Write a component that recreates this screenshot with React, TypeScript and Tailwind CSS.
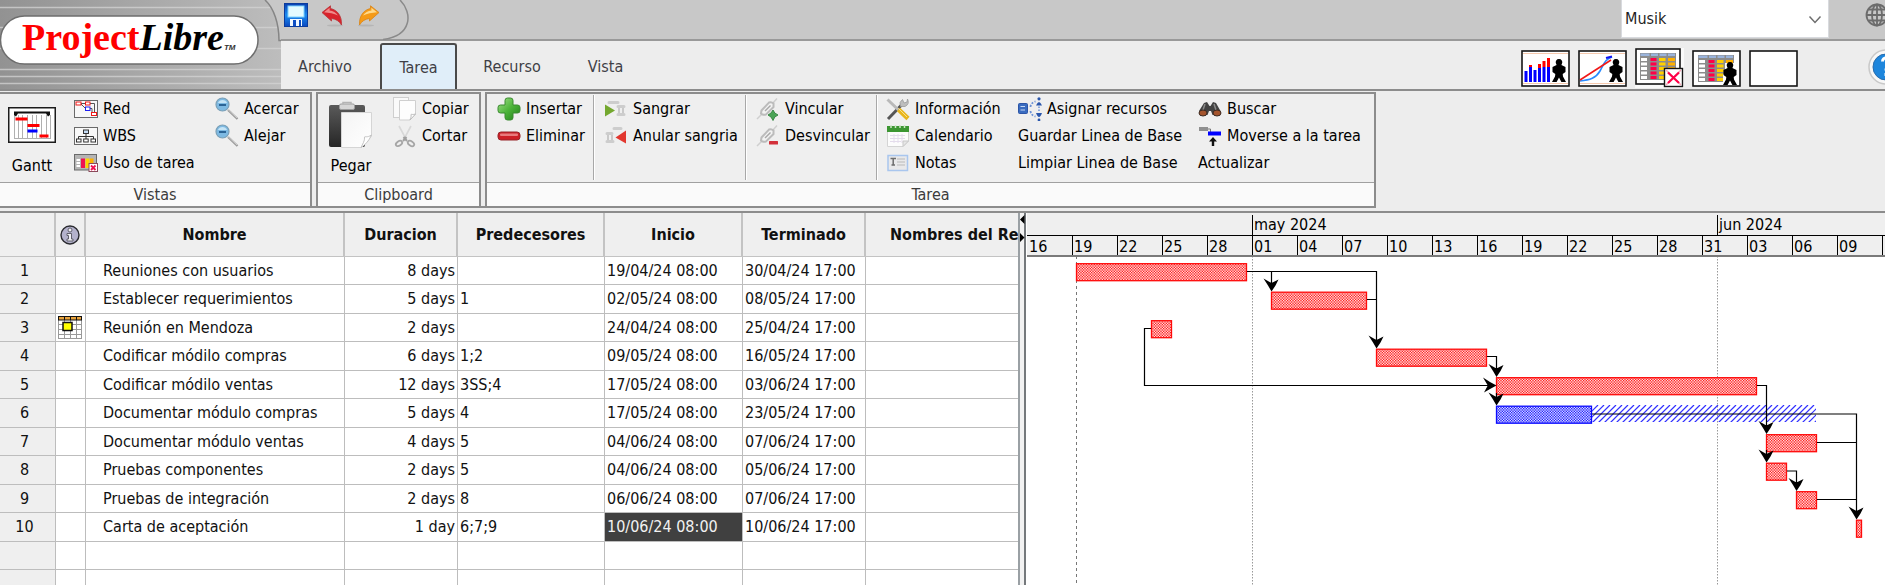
import React from "react";

/* ---------- Quick-access icons ---------- */

const SaveIcon = () => (
  <svg width="24" height="24" viewBox="0 0 24 24" aria-hidden="true">
    <defs>
      <linearGradient id="save" x1="0" y1="0" x2="0" y2="1">
        <stop offset="0" stopColor="#0a3fb0" />
        <stop offset="0.5" stopColor="#1b8cf0" />
        <stop offset="1" stopColor="#0b49c0" />
      </linearGradient>
    </defs>
    <rect x="0.5" y="0.5" width="23" height="23" fill="url(#save)" stroke="#0b3c9c" />
    <rect x="4" y="3" width="16" height="11" fill="#e4fbff" stroke="#7fd4ff" />
    <rect x="6" y="16" width="12" height="7" fill="#f2faff" />
    <rect x="9" y="17" width="3" height="6" fill="#0f4fc4" />
    <rect x="15" y="17" width="2" height="6" fill="#0f4fc4" />
  </svg>
);

const UndoIcon = () => (
  <svg width="22" height="22" viewBox="0 0 22 22" aria-hidden="true">
    <ellipse cx="14" cy="20.500" rx="8" ry="1" fill="#b5b5b5" />
    <path d="M1 7.500L9.500 0.800V3.500C16.500 5 21 11 20.500 20C18 16 15 14 10.500 13.500V16Z" fill="#d8232c" stroke="#b8363a" strokeWidth="0.800" />
    <path d="M3 7.200L8.600 2.800V5.500C12 6 15 7.500 17 10.500C13 8.500 8 7.800 3 7.200Z" fill="#f08a8a" />
  </svg>
);

const RedoIcon = () => (
  <svg width="22" height="22" viewBox="0 0 22 22" aria-hidden="true">
    <ellipse cx="8" cy="20.500" rx="8" ry="1" fill="#b5b5b5" />
    <path d="M21 7.500L12.500 0.800V3.500C5.500 5 1 11 1.500 20C4 16 7 14 11.500 13.500V16Z" fill="#f59a16" stroke="#d88418" strokeWidth="0.800" />
    <path d="M19 7.200L13.400 2.800V5.500C10 6 7 7.500 5 10.500C9 8.500 14 7.800 19 7.200Z" fill="#ffd98a" />
  </svg>
);

const GlobeIcon = () => (
  <svg className="shrink-0" width="24" height="24" viewBox="0 0 24 24" fill="none" stroke="#6c6c6c" strokeWidth="1.800" aria-hidden="true">
    <circle cx="12" cy="12" r="10.500" />
    <ellipse cx="12" cy="12" rx="5" ry="10.500" />
    <path d="M12 1.500V22.500M1.500 12H22.500M3.500 6.500H20.500M3.500 17.500H20.500" />
  </svg>
);

const HelpIcon = () => (
  <svg className="shrink-0" width="36" height="36" viewBox="0 0 36 36" aria-hidden="true">
    <circle cx="18" cy="18" r="17" fill="#f7f7f7" stroke="#c9c9c9" strokeWidth="1.500" />
    <circle cx="18" cy="18" r="13" fill="#1e86dc" stroke="#2a6cab" strokeWidth="1" />
    <path d="M14.500 12.500c0-5 8-5 8 0 0 4-4.500 4-4.500 9M18 24v3" stroke="#fff" strokeWidth="3" fill="none" />
  </svg>
);

/* ---------- Ribbon icons ---------- */

const GanttIcon = () => (
  <svg width="48" height="36" viewBox="0 0 48 36" aria-hidden="true">
    <rect x="0.750" y="0.750" width="46.500" height="34.500" fill="#fff" stroke="#1c1c1c" strokeWidth="1.500" />
    <path d="M6.500 8V31M10.500 8V31M14.500 8V31M19.500 8V31M24.500 8V31M28.500 8V31M33.500 8V31M38.500 8V31M42.500 8V31M6 31.500H43" stroke="#b0b0b0" />
    <path d="M6 4.500H42V8L40 9.500 38 6.500H10L8 9.500 6 8Z" fill="#111" />
    <rect x="7.500" y="10.500" width="12" height="3" fill="#f00" />
    <rect x="19.500" y="17" width="12" height="3" fill="#f00" />
    <rect x="19.500" y="22.500" width="10" height="3" fill="#00f" />
    <rect x="31.500" y="27.500" width="9" height="3" fill="#f00" />
  </svg>
);

const NetworkIcon = () => (
  <svg width="24" height="18" viewBox="0 0 24 18" aria-hidden="true">
    <rect x="0.500" y="0.500" width="23" height="17" fill="#f8f8f8" stroke="#6a6a6a" />
    <path d="M7 3.500H12M16 3.500H20.500V12M7 4L11 8M16 8.500H18V13" fill="none" stroke="#555" />
    <rect x="2" y="2" width="5" height="3" fill="#fff" stroke="#f01818" />
    <rect x="11.500" y="2" width="4.500" height="3" fill="#fff" stroke="#f01818" />
    <rect x="11.500" y="7" width="4.500" height="3.500" fill="#fff" stroke="#2020f0" />
    <rect x="17.500" y="12.500" width="5" height="3" fill="#fff" stroke="#f01818" />
  </svg>
);

const WbsIcon = () => (
  <svg width="24" height="18" viewBox="0 0 24 18" aria-hidden="true">
    <rect x="0.500" y="0.500" width="23" height="17" fill="#f8f8f8" stroke="#6a6a6a" />
    <path d="M12 6V12M4.500 12V9.500H19.500V12" fill="none" stroke="#333" />
    <g fill="#fff" stroke="#333">
      <rect x="9.500" y="3" width="5" height="3.500" fill="#c5dcf5" />
      <rect x="2.500" y="12" width="4.500" height="3" />
      <rect x="9.700" y="12" width="4.500" height="3" />
      <rect x="17" y="12" width="4.500" height="3" />
    </g>
  </svg>
);

const TaskUsageIcon = () => (
  <svg width="24" height="18" viewBox="0 0 24 18" aria-hidden="true">
    <rect x="0.500" y="0.500" width="22" height="15.500" fill="#b4b4b4" stroke="#6a6a6a" />
    <path d="M2.500 5h3.500v2h-3.500zM2.500 8h3.500v2h-3.500zM2.500 11h3.500v2h-3.500z" fill="#fff" />
    <rect x="7" y="4.500" width="4" height="9.500" fill="#f01050" />
    <rect x="11.500" y="4.500" width="4" height="9.500" fill="#ffd400" />
    <rect x="16" y="4.500" width="3.500" height="9.500" fill="#ffb000" />
    <rect x="15" y="9.500" width="8.500" height="8" fill="#fff" stroke="#8a4a5a" />
    <path d="M17 11.500L21.500 16M21.500 11.500L17 16" stroke="#f01050" strokeWidth="1.800" />
  </svg>
);

const ZoomIcon = () => (
  <svg width="24" height="24" viewBox="0 0 24 24" aria-hidden="true">
    <path d="M13 13L22.500 22" stroke="#9a9a9a" strokeWidth="2.200" />
    <path d="M13 12.500L22 21" stroke="#dcdcdc" strokeWidth="0.800" />
    <circle cx="7.500" cy="7.500" r="6.500" fill="#7db9e2" stroke="#7a9fb6" strokeWidth="1.200" />
    <path d="M3 6C4 2 11 2 12 6Z" fill="#c5e4f6" />
    <rect x="4" y="7" width="7" height="2" fill="#2b6496" />
  </svg>
);

const PasteIcon = () => (
  <svg width="46" height="48" viewBox="0 0 46 48" aria-hidden="true">
    <defs>
      <linearGradient id="board" x1="0" y1="0" x2="0" y2="1">
        <stop offset="0" stopColor="#5a5a5a" />
        <stop offset="1" stopColor="#262626" />
      </linearGradient>
      <linearGradient id="paper" x1="0" y1="0" x2="1" y2="1">
        <stop offset="0" stopColor="#f4f4f4" />
        <stop offset="1" stopColor="#fff" />
      </linearGradient>
    </defs>
    <rect x="1" y="4" width="36" height="42" rx="2" fill="url(#board)" />
    <rect x="11.500" y="3" width="15" height="5.500" rx="1.500" fill="#d6d6d6" stroke="#9c9c9c" />
    <path d="M15 3V1.500H23V3" fill="none" stroke="#b4b4b4" strokeWidth="1.500" />
    <path d="M13.500 11.500H43.500V35L33.500 46.500H13.500Z" fill="url(#paper)" stroke="#d5d5d5" />
    <path d="M43.500 34C39 37 37 35 36.500 36C37 40 34.500 43 33 46.500C37 44 41 40 43.500 34Z" fill="#fff" stroke="#c4c4c4" />
  </svg>
);

const CopyIcon = () => (
  <svg width="24" height="24" viewBox="0 0 24 24" aria-hidden="true">
    <rect x="0.500" y="0.500" width="15" height="20" fill="#fafafa" stroke="#cfcfcf" />
    <path d="M6.500 3.500H22.500V17L17 23H6.500Z" fill="#fdfdfd" stroke="#cfcfcf" />
    <path d="M22.500 17C20 18 18 17 18 17.500 18.500 20 17.500 21 17 23Z" fill="#fff" stroke="#bcbcbc" />
  </svg>
);

const CutIcon = () => (
  <svg width="24" height="24" viewBox="0 0 24 24" fill="none" aria-hidden="true">
    <path d="M6 2L13.500 16M18 2L10.500 16" stroke="#d8d8d8" strokeWidth="1.600" />
    <path d="M10.500 13L14 17M13.500 13L10 17" stroke="#a0a0a0" strokeWidth="2" />
    <ellipse cx="6" cy="19.500" rx="3.500" ry="2.200" stroke="#a6a6a6" strokeWidth="1.800" transform="rotate(-35 6 19.500)" />
    <ellipse cx="18" cy="19.500" rx="3.500" ry="2.200" stroke="#a6a6a6" strokeWidth="1.800" transform="rotate(35 18 19.500)" />
  </svg>
);

const PlusIcon = () => (
  <svg width="24" height="24" viewBox="0 0 24 24" aria-hidden="true">
    <defs>
      <linearGradient id="plus" x1="0" y1="0" x2="1" y2="1">
        <stop offset="0" stopColor="#a6e08e" />
        <stop offset="0.500" stopColor="#4db53a" />
        <stop offset="1" stopColor="#1f7d18" />
      </linearGradient>
    </defs>
    <path d="M8 3.500Q8 1 10.500 1H13.500Q16 1 16 3.500V8H20.500Q23 8 23 10.500V13.500Q23 16 20.500 16H16V20.500Q16 23 13.500 23H10.500Q8 23 8 20.500V16H3.500Q1 16 1 13.500V10.500Q1 8 3.500 8H8Z" fill="url(#plus)" stroke="#3a8a30" />
  </svg>
);

const MinusIcon = () => (
  <svg width="24" height="24" viewBox="0 0 24 24" aria-hidden="true">
    <rect x="1" y="8" width="22" height="8" rx="3" fill="#cc1f26" stroke="#97262b" />
    <rect x="3" y="9.500" width="18" height="2.500" rx="1" fill="#e87b7d" />
  </svg>
);

const IndentIcon = () => (
  <svg width="24" height="24" viewBox="0 0 24 24" aria-hidden="true">
    <path d="M5 5.500H14M14 9.500H20M14 17.500H20" stroke="#cdcdcd" strokeWidth="3" strokeLinecap="round" />
    <path d="M15 11V16M19 11V16" stroke="#bdbdbd" strokeWidth="1.500" />
    <path d="M1 7.500L11 13.500 1 19.500Z" fill="#74a82f" />
  </svg>
);

const OutdentIcon = () => (
  <svg width="24" height="24" viewBox="0 0 24 24" aria-hidden="true">
    <path d="M10 4.500H17M3 9.500H8M3 17.500H9" stroke="#cdcdcd" strokeWidth="3" strokeLinecap="round" />
    <path d="M4 11V16M8 11V16" stroke="#bdbdbd" strokeWidth="1.500" />
    <path d="M22 6.500L11.500 13.500 22 19.500Z" fill="#e2372f" />
  </svg>
);

const LinkBase = () => (
  <>
    <path d="M1 22L6 17M17 6L21 1.500" stroke="#cfcfcf" strokeWidth="1.500" />
    <path d="M5.500 13.500L13 5.500Q15.500 4.500 17.500 6.500V10L10 17.500Q7 18.500 5 16.500Z" fill="#f3f3f3" stroke="#bcbcbc" strokeWidth="2" />
    <path d="M9 14L14.500 8.500" stroke="#a8a8a8" strokeWidth="1.500" />
  </>
);

const LinkIcon = () => (
  <svg width="24" height="24" viewBox="0 0 24 24" aria-hidden="true">
    <LinkBase />
    <path d="M17 13L18.800 16 22 18 18.800 20 17 23.500 15 20 12 18 15 16Z" fill="#4aa456" stroke="#3c8a48" />
  </svg>
);

const UnlinkIcon = () => (
  <svg width="24" height="24" viewBox="0 0 24 24" aria-hidden="true">
    <LinkBase />
    <rect x="13" y="17" width="9" height="3.500" rx="0.500" fill="#d3303a" />
  </svg>
);

const ToolsIcon = () => (
  <svg width="24" height="24" viewBox="0 0 24 24" aria-hidden="true">
    <path d="M2 22L15 8.500" stroke="#555" strokeWidth="3" />
    <path d="M14.500 9.500Q12.500 5 16.500 2.500L18 6 21 5 21.500 2Q24 7 19 9.500Z" fill="#bdbdbd" stroke="#9a9a9a" strokeWidth="0.800" />
    <path d="M1.500 2.500L12.500 13" stroke="#b9b9b9" strokeWidth="3" />
    <path d="M12.500 12.500L22 21.500" stroke="#e8b51c" strokeWidth="4.500" />
    <path d="M12.500 11.500L21 20" stroke="#f8e08a" strokeWidth="1" />
  </svg>
);

const CalendarIcon = () => (
  <svg width="24" height="24" viewBox="0 0 24 24" aria-hidden="true">
    <path d="M1.500 5H22.500V17L17 22.500H1.500Z" fill="#fcfcfc" stroke="#d4d4d4" />
    <rect x="1" y="2" width="22" height="6" fill="#3c9632" />
    <path d="M5 1V4M9.500 1V4M14 1V4M18.500 1V4" stroke="#cde8c8" strokeWidth="1.500" />
    <path d="M4 11.500H19M4 14.500H19M4 17.500H15M8 10V19M12 10V19M16 10V19" stroke="#e4dcec" />
    <path d="M22.500 17L17 22.500V17Z" fill="#e6e6e6" stroke="#c8c8c8" />
  </svg>
);

const NotesIcon = () => (
  <svg width="24" height="24" viewBox="0 0 24 24" aria-hidden="true">
    <rect x="2" y="4.500" width="19.500" height="15" fill="#e9e9ea" stroke="#a9c6ee" strokeWidth="1.500" />
    <path d="M4.500 7.500H10M7.200 7.500V14M5.500 14H9" stroke="#6e6e6e" strokeWidth="1.500" />
    <path d="M11 8H19M11 11H19M11 14H19" stroke="#b9b9b9" />
  </svg>
);

const AssignIcon = () => (
  <svg width="24" height="24" viewBox="0 0 24 24" fill="none" aria-hidden="true">
    <rect x="0.500" y="6.500" width="9" height="10" rx="1" fill="#3a6cc0" stroke="#2d55a6" />
    <path d="M2.500 9.500H7M2.500 13H7" stroke="#c5d8f5" />
    <path d="M12.500 10Q13 5.500 17.500 4.500M12.500 14Q13 18.500 17.500 19.500" stroke="#6c92d6" strokeWidth="1.800" strokeDasharray="2 1.500" />
    <g fill="#2a56ac">
      <circle cx="21" cy="1.800" r="1.600" /><path d="M18 8.500Q21 1.500 24 8.500Z" />
      <circle cx="21" cy="23" r="1.400" /><path d="M18 16Q21 24 24 16Z" />
    </g>
    <path d="M21 9.500V15" stroke="#6c92d6" strokeWidth="1.500" strokeDasharray="1.500 1.500" />
  </svg>
);

const BinocularsIcon = () => (
  <svg width="24" height="24" viewBox="0 0 24 24" aria-hidden="true">
    <path d="M6 6L9 5 11.500 9H12.500L15 5 18 6 22.500 14 21 18H14.500L13 14H11L9.500 18H3L1 14Z" fill="#424242" />
    <path d="M7 7L5 13M16 7L18 13" stroke="#8a8a8a" strokeWidth="1.500" />
    <ellipse cx="5" cy="16" rx="4" ry="3" fill="#a4542c" stroke="#3a2a22" />
    <ellipse cx="19" cy="16" rx="4" ry="3" fill="#a4542c" stroke="#3a2a22" />
  </svg>
);

const GoToTaskIcon = () => (
  <svg width="24" height="24" viewBox="0 0 24 24" aria-hidden="true">
    <rect x="1" y="3" width="9" height="4" fill="#8f8f8f" />
    <path d="M10 5H12.500V9" fill="none" stroke="#777" />
    <rect x="10" y="7.500" width="13" height="4" fill="#00f" />
    <path d="M15 13L19 17.500H16.200V22H13.800V17.500H11Z" fill="#111" />
  </svg>
);

/* ---------- View-switcher icons ---------- */

const Person = () => (
  <path
    d="M38 9a3.200 3.200 0 0 1 3 4.600l-0.600 1.400 4.100 2v5l-2.800 2 0.300 2.600 3 5.400h-4.600l-2.400-4.500-2.400 4.500h-4.600l3-5.400 0.300-2.600-2.800-2v-5l4.100-2-0.600-1.400A3.200 3.200 0 0 1 38 9Z"
    fill="#000"
  />
);

const Frame = ({ children }: { children?: React.ReactNode }) => (
  <svg width="49" height="37" viewBox="0 0 49 37" aria-hidden="true">
    <rect x="1" y="1" width="47" height="35" fill="#fff" stroke="#151515" strokeWidth="1.600" />
    {children}
  </svg>
);

const UsageGrid = () => (
  <>
    <rect x="6" y="5" width="36" height="27" fill="#8c8c8c" />
    <path d="M6.500 5.500h9v2.500h-9zM17 5.500h7v2.500h-7zM25.500 5.500h7v2.500h-7zM34 5.500h7v2.500h-7z" fill="#9ab4dc" />
    {[10, 14.500, 19, 23.500, 28].map((y) => (
      <g key={y}>
        <rect x="7" y={y} width="6" height="3" fill="#fff" />
        <rect x="16.500" y={y} width="6" height="3" fill="#ff0048" />
        <rect x="25" y={y} width="6.500" height="3" fill="#ffd000" />
        <rect x="34" y={y} width="7" height="3" fill="#ffb000" />
      </g>
    ))}
  </>
);

const HistogramIcon = () => (
  <Frame>
    <path d="M2 3.500H47M2 33.500H47" stroke="#f5c9ae" />
    <g fill="#00f">
      <rect x="3.500" y="21" width="3" height="11" />
      <rect x="8" y="17" width="3" height="15" />
      <rect x="12.500" y="20" width="3" height="12" />
      <rect x="17" y="18" width="3" height="14" />
      <rect x="21.500" y="17" width="3" height="15" />
      <rect x="26" y="17" width="3" height="15" />
    </g>
    <g fill="#f00">
      <rect x="8" y="15" width="3" height="2" />
      <rect x="17" y="14" width="3" height="4" />
      <rect x="21.500" y="11" width="3" height="6" />
      <rect x="26" y="8" width="3" height="9" />
    </g>
    <Person />
  </Frame>
);

const CurveIcon = () => (
  <Frame>
    <path d="M2 3.500H47M2 33.500H47" stroke="#f5c9ae" />
    <path d="M2 31C12 30 18 28 22 21S27 9 34 7" fill="none" stroke="#2a8cff" strokeWidth="1.600" />
    <path d="M28 8L34 6.500" stroke="#1010f0" strokeWidth="2" />
    <path d="M2 30L33 10" stroke="#f01818" strokeWidth="1.600" />
    <Person />
  </Frame>
);

const TaskUsageView = () => (
  <svg className="relative -top-[2px]" width="49" height="40" viewBox="0 0 49 40" aria-hidden="true">
    <rect width="49" height="40" fill="#fafafa" />
    <rect x="1" y="1" width="44" height="35" fill="#fff" stroke="#151515" strokeWidth="1.600" />
    <g transform="translate(-1 0)"><UsageGrid /></g>
    <rect x="29.500" y="20.500" width="18" height="18" fill="#fff" stroke="#151515" strokeWidth="1.400" />
    <path d="M31 22L46 37M46 22L31 37" stroke="#f5a8b8" strokeWidth="1.500" />
    <path d="M33 24.500L44 35M44 24.500L33 35" stroke="#ff0048" strokeWidth="2.200" />
  </svg>
);

const ResourceUsageView = () => (
  <Frame>
    <UsageGrid />
    <path d="M33 13H43V34H31V24H33Z" fill="#fff" />
    <g transform="translate(0 3)"><Person /></g>
  </Frame>
);

/* ---------- Ribbon ---------- */

const RibbonButton = ({ label, icon }: { label: string; icon?: React.ReactNode }) => (
  <button type="button" className="flex h-[27px] items-center gap-[5px] whitespace-nowrap text-black">
    {icon && <span className="flex w-6 shrink-0 justify-center">{icon}</span>}
    {label}
  </button>
);

const RibbonGroup = ({ title, className, children }: { title: string; className: string; children: React.ReactNode }) => (
  <section className={"flex flex-col border-x-2 border-t-2 border-[#8c8c8c] bg-[#efefef] " + className}>
    <div className="flex h-[88px] pt-px">{children}</div>
    <h2 className="flex h-6 items-center justify-center border-t border-[#a0a0a0] bg-[#fafafa] text-[#3c3c3c]">{title}</h2>
  </section>
);

const Separator = () => <div className="h-[85px] w-[2px] shrink-0 border-r border-white bg-[#a8a8a8]" />;

/* ---------- Task data ---------- */

type Task = [name: string, duration: string, predecessors: string, start: string, end: string];

const tasks: Task[] = [
  ["Reuniones con usuarios", "8 days", "", "19/04/24 08:00", "30/04/24 17:00"],
  ["Establecer requerimientos", "5 days", "1", "02/05/24 08:00", "08/05/24 17:00"],
  ["Reunión en Mendoza", "2 days", "", "24/04/24 08:00", "25/04/24 17:00"],
  ["Codificar módilo compras", "6 days", "1;2", "09/05/24 08:00", "16/05/24 17:00"],
  ["Codificar módilo ventas", "12 days", "3SS;4", "17/05/24 08:00", "03/06/24 17:00"],
  ["Documentar módulo compras", "5 days", "4", "17/05/24 08:00", "23/05/24 17:00"],
  ["Documentar módulo ventas", "4 days", "5", "04/06/24 08:00", "07/06/24 17:00"],
  ["Pruebas componentes", "2 days", "5", "04/06/24 08:00", "05/06/24 17:00"],
  ["Pruebas de integración", "2 days", "8", "06/06/24 08:00", "07/06/24 17:00"],
  ["Carta de aceptación", "1 day", "6;7;9", "10/06/24 08:00", "10/06/24 17:00"],
];

const InfoIcon = () => (
  <svg className="mx-auto" width="20" height="20" viewBox="0 0 20 20" aria-hidden="true">
    <circle cx="10" cy="10" r="9" fill="#b4b2cc" stroke="#2b2b30" strokeWidth="1.400" />
    <circle cx="10" cy="5" r="2" fill="#eeeef4" stroke="#55555f" strokeWidth="0.900" />
    <path d="M7 8.500H11.500V14H13V16H7V14H8.500V10.500H7Z" fill="#eeeef4" stroke="#55555f" strokeWidth="0.900" />
  </svg>
);

const ConstraintIcon = () => (
  <svg className="ml-[2px]" width="24" height="23" viewBox="0 0 24 23" aria-hidden="true">
    <rect x="0.500" y="0.500" width="23" height="22" fill="#fff" stroke="#999" />
    <path d="M6.500 4V22M12.500 4V22M18.500 4V22M0 8.500H24M0 13.500H24M0 18.500H24" stroke="#999" />
    <rect x="0.500" y="0.500" width="23" height="3.500" fill="#e8a33c" stroke="#111" />
    <path d="M6.500 0V4M12.500 0V4M18.500 0V4" stroke="#111" />
    <rect x="5" y="6.500" width="9" height="8" fill="#ff0" stroke="#111" strokeWidth="1.500" />
  </svg>
);

const cell = "overflow-hidden whitespace-nowrap border-b border-r border-[#bdbdbd] px-[2px]";
const head = "overflow-hidden whitespace-nowrap border-b border-r-2 border-[#c3c3c3] bg-[#efefef] text-center font-bold";

const TaskTable = () => (
  <table className="w-[1124px] table-fixed border-separate border-spacing-0 text-[#111]">
    <colgroup>
      <col className="w-[56px]" />
      <col className="w-[30px]" />
      <col className="w-[259px]" />
      <col className="w-[113px]" />
      <col className="w-[147px]" />
      <col className="w-[138px]" />
      <col className="w-[123px]" />
      <col className="w-[258px]" />
    </colgroup>
    <thead>
      <tr className="h-[44px]">
        <th className={head} aria-label="ID"></th>
        <th className={head} aria-label="Indicadores"><InfoIcon /></th>
        <th className={head}>Nombre</th>
        <th className={head}>Duracion</th>
        <th className={head}>Predecesores</th>
        <th className={head}>Inicio</th>
        <th className={head}>Terminado</th>
        <th className={head + " pl-[24px] text-left"}>Nombres del Recurso</th>
      </tr>
    </thead>
    <tbody>
      {tasks.map(([name, duration, pred, start, end], i) => (
        <tr key={name} className="h-[28px] even:h-[29px]">
          <td className={cell + " bg-[#efefef] pr-[8px] text-center"}>{i + 1}</td>
          <td className="border-b border-r border-[#bdbdbd]">{i === 2 && <ConstraintIcon />}</td>
          <td className={cell + " pl-[17px]"}>{name}</td>
          <td className={cell + " text-right"}>{duration}</td>
          <td className={cell}>{pred}</td>
          <td className={cell + (i === 9 ? " bg-[#404040] text-[#f2f2f2]" : "")}>{start}</td>
          <td className={cell}>{end}</td>
          <td className={cell}></td>
        </tr>
      ))}
      {[0, 1].map((i) => (
        <tr key={i} className="h-[28px] even:h-[29px]">
          <td className={cell + " bg-[#efefef]"}></td>
          {[1, 2, 3, 4, 5, 6, 7].map((c) => (
            <td key={c} className={cell}></td>
          ))}
        </tr>
      ))}
    </tbody>
  </table>
);

/* ---------- Gantt chart ---------- */

const days = ["16", "19", "22", "25", "28", "01", "04", "07", "10", "13", "16", "19", "22", "25", "28", "31", "03", "06", "09", ""];

// x, width, row, normal (non-critical)
const bars: [number, number, number, boolean?][] = [
  [50, 170, 0],
  [245, 95, 1],
  [125, 20, 2],
  [350, 110, 3],
  [470, 260, 4],
  [470, 95, 5, true],
  [740, 50, 6],
  [740, 20, 7],
  [770, 20, 8],
  [830, 5, 9],
];

const Dither = ({ id, dot, ground }: { id: string; dot: string; ground: string }) => (
  <pattern id={id} width="8" height="8" patternUnits="userSpaceOnUse">
    <rect width="8" height="8" fill={ground} />
    {Array.from({ length: 36 }, (_, i) => [i % 6, Math.floor(i / 6)])
      .filter(([cx, cy]) => (cx + cy) % 2 === 0)
      .map(([cx, cy]) => (
        <rect key={`${cx}-${cy}`} x={(cx * 4) / 3} y={(cy * 4) / 3} width={4 / 3} height={4 / 3} fill={dot} />
      ))}
  </pattern>
);

const ArrowDown = ({ x, y }: { x: number; y: number }) => (
  <path d={`M${x} ${y}L${x - 3.5} ${y - 6}L${x - 8} ${y - 13}L${x - 1} ${y - 9}H${x + 1}L${x + 7} ${y - 12}L${x + 4} ${y - 6}Z`} fill="#000" />
);

const GanttChart = () => (
  <svg className="block" width="900" height="329" viewBox="0 1 900 329" role="img" aria-label="Gantt">
    <defs>
      <Dither id="critical" dot="#ff2020" ground="#ffdede" />
      <Dither id="normal" dot="#2020ff" ground="#dedeff" />
      <clipPath id="slack"><rect x="565" y="149" width="224" height="17" /></clipPath>
    </defs>
    <path d="M49.500 0V330" stroke="#777" strokeDasharray="3 3" />
    <path d="M225.500 0V330M690.500 0V330" stroke="#999" strokeDasharray="1.500 1.500" />
    <g clipPath="url(#slack)" stroke="#3030ff" strokeWidth="1.200">
      {Array.from({ length: 42 }, (_, i) => (
        <path key={i} d={`M${553 + i * 6} 167L${571 + i * 6} 149`} />
      ))}
    </g>
    {bars.map(([x, w, row, normal]) => (
      <rect
        key={row}
        x={x - 0.5}
        y={7.7 + row * 28.5}
        width={w}
        height="17"
        fill={normal ? "url(#normal)" : "url(#critical)"}
        stroke={normal ? "#0a0aff" : "#ff0a0a"}
        strokeWidth="1.300"
      />
    ))}
    <g fill="none" stroke="#000" strokeWidth="1.200">
      <path d="M220 15.500H349.500V86M244.500 15.500V30M340 43.500H349.500" />
      <path d="M124 72.500H117.500V129.500H466" />
      <path d="M460 100.500H469.500V114M469.500 137V143" />
      <path d="M730 129.500H739.500V172M739.500 194V200" />
      <path d="M565 158H829.500V256M790 186.500H829.500M790 243.500H829.500" />
      <path d="M760 215H769.500V229" />
    </g>
    <ArrowDown x={244.500} y={35.500} />
    <ArrowDown x={349.500} y={92.500} />
    <ArrowDown x={469.500} y={121} />
    <ArrowDown x={469.500} y={149.500} />
    <ArrowDown x={739.500} y={178} />
    <ArrowDown x={739.500} y={206.500} />
    <ArrowDown x={769.500} y={235} />
    <ArrowDown x={829.500} y={263.500} />
    <path d="M469.500 129.500L463 133 457 136.500 460.500 130V129L456 121.500 463 126Z" fill="#000" />
  </svg>
);

const Timeline = () => (
  <div className="bg-[#efefef] text-black">
    <div className="flex h-[23px] items-end border-b border-black leading-[20px]">
      <div className="w-[225px] shrink-0" />
      <div className="w-[465px] shrink-0 border-l border-black pl-px">may 2024</div>
      <div className="w-[225px] shrink-0 border-l border-black pl-px">jun 2024</div>
    </div>
    <div className="flex h-[21px] border-b-2 border-[#7a7a7a]">
      {days.map((d, i) => (
        <div
          key={i}
          className="w-[45px] shrink-0 border-l border-black pl-px leading-[22px] first:border-transparent"
        >
          {d}
        </div>
      ))}
    </div>
  </div>
);

/* ---------- Header ---------- */

const Logo = () => (
  <div className="relative h-[89px] w-[281px] shrink-0">
    <svg className="absolute inset-0" width="281" height="89" viewBox="0 0 281 89" aria-hidden="true">
      <defs>
        <linearGradient id="metal" x1="0" y1="0" x2="1" y2="0">
          <stop offset="0" stopColor="#929292" />
          <stop offset="1" stopColor="#bdbdbd" />
        </linearGradient>
      </defs>
      <rect width="281" height="89" fill="#c8c8c8" />
      <path d="M0 0H265C274 8 279 24 279 40H281V89H0Z" fill="url(#metal)" />
      <path d="M0 7.500H270M0 27.500H277M0 48.500H281M0 69.500H281M0 76.500H281M0 83.500H281" stroke="#d4d4d4" strokeWidth="1.500" opacity="0.750" />
      <path d="M265 0C274 8 279 24 279 40.500H281" fill="none" stroke="#858585" strokeWidth="1.500" />
      <rect x="0.500" y="16" width="257.500" height="48" rx="24" fill="#fff" stroke="#6e6e6e" strokeWidth="1.500" />
    </svg>
    <h1 className="relative flex items-baseline pl-[22px] pt-[13px] font-['Liberation_Serif',serif] text-[38px] font-bold leading-[48px]">
      <span className="text-[#f00]">Project</span>
      <span className="italic text-black">Libre</span>
      <span className="font-['Liberation_Sans',sans-serif] text-[8px] italic leading-none text-[#333]">TM</span>
    </h1>
  </div>
);

const tabs: [string, string][] = [
  ["Archivo", "w-[88px]"],
  ["Tarea", "w-[77px]"],
  ["Recurso", "w-[88px]"],
  ["Vista", "w-[77px]"],
];

const views: [string, React.ReactNode][] = [
  ["Histograma", <HistogramIcon />],
  ["Curvas", <CurveIcon />],
  ["Uso de tareas", <TaskUsageView />],
  ["Uso de recursos", <ResourceUsageView />],
  ["Sin vista", <Frame />],
];

export default function App() {
  return (
    <div className="flex h-screen flex-col overflow-hidden bg-[#ededed] font-['DejaVu_Sans_Condensed','Noto_Sans',sans-serif] text-[16px] leading-[20px]">
      <header className="flex shrink-0 overflow-hidden">
        <Logo />
        <div className="flex min-w-0 flex-1 flex-col">
          <div className="flex h-[41px] border-b-2 border-[#999] bg-[#c8c8c8]">
            <div className="relative flex w-[130px] shrink-0 items-start pl-[3px] pt-[3px]">
              <svg className="absolute inset-y-0 right-0" width="30" height="40" viewBox="0 0 30 40" fill="none" aria-hidden="true">
                <path d="M19 0C32 13 31 36 2 39.500" stroke="#8a8a8a" strokeWidth="1.500" />
              </svg>
              <button type="button" aria-label="Guardar"><SaveIcon /></button>
              <button type="button" aria-label="Deshacer" className="ml-[13px] pt-[2px]"><UndoIcon /></button>
              <button type="button" aria-label="Rehacer" className="ml-[15px] pt-[2px]"><RedoIcon /></button>
            </div>
            <div className="relative ml-auto w-[208px] shrink-0">
              <select aria-label="Proyecto" className="h-[38px] w-full appearance-none border border-t-0 border-[#d8dade] bg-white pl-[3px] text-[#1f1f1f]">
                <option>Musik</option>
              </select>
              <svg className="pointer-events-none absolute right-[7px] top-[15px]" width="14" height="9" viewBox="0 0 14 9" fill="none" aria-hidden="true">
                <path d="M1.500 1.500L7 7.500 12.500 1.500" stroke="#6e6e6e" strokeWidth="1.500" />
              </svg>
            </div>
            <button type="button" aria-label="Idioma" className="ml-[36px] flex w-5 shrink-0 items-start overflow-hidden pt-[3px]">
              <GlobeIcon />
            </button>
          </div>
          <nav className="flex h-12 items-stretch">
            <div className="flex gap-[11px] pt-[2px]">
              {tabs.map(([t, w]) => (
                <button
                  key={t}
                  type="button"
                  className={
                    "pt-[2px] text-[#3f3f46] " +
                    w +
                    (t === "Tarea" ? " rounded-t-[3px] border-2 border-b-0 border-[#4a4a4a] bg-[#e0eef9]" : "")
                  }
                >
                  {t}
                </button>
              ))}
            </div>
            <div className="ml-auto flex shrink-0 items-start gap-2 pt-[9px]">
              {views.map(([label, icon]) => (
                <button key={label} type="button" aria-label={label}>{icon}</button>
              ))}
            </div>
            <button type="button" aria-label="Ayuda" className="ml-[70px] flex w-[17px] shrink-0 items-center overflow-hidden pt-[4px]">
              <HelpIcon />
            </button>
          </nav>
        </div>
      </header>

      <div className="flex shrink-0 border-y-2 border-[#8c8c8c] pb-[3px] pt-px">
        <div className="flex gap-[4px] border-b-2 border-[#8c8c8c]">
          <RibbonGroup title="Vistas" className="w-[312px] border-l-0">
            <button type="button" className="ml-[8px] flex w-[48px] shrink-0 flex-col items-center justify-between pb-[6px] pt-[12px] text-black">
              <GanttIcon />
              Gantt
            </button>
            <div className="ml-[18px] w-[141px] shrink-0">
              <RibbonButton label="Red" icon={<NetworkIcon />} />
              <RibbonButton label="WBS" icon={<WbsIcon />} />
              <RibbonButton label="Uso de tarea" icon={<TaskUsageIcon />} />
            </div>
            <div>
              <RibbonButton label="Acercar" icon={<ZoomIcon />} />
              <RibbonButton label="Alejar" icon={<ZoomIcon />} />
            </div>
          </RibbonGroup>
          <RibbonGroup title="Clipboard" className="w-[165px]">
            <button type="button" className="ml-[10px] flex w-[46px] shrink-0 flex-col items-center justify-between pb-[6px] pt-[6px] text-black">
              <PasteIcon />
              Pegar
            </button>
            <div className="ml-[19px]">
              <RibbonButton label="Copiar" icon={<CopyIcon />} />
              <RibbonButton label="Cortar" icon={<CutIcon />} />
            </div>
          </RibbonGroup>
          <RibbonGroup title="Tarea" className="w-[891px]">
            <div className="ml-[10px] w-[96px] shrink-0">
              <RibbonButton label="Insertar" icon={<PlusIcon />} />
              <RibbonButton label="Eliminar" icon={<MinusIcon />} />
            </div>
            <Separator />
            <div className="ml-[9px] w-[141px] shrink-0">
              <RibbonButton label="Sangrar" icon={<IndentIcon />} />
              <RibbonButton label="Anular sangria" icon={<OutdentIcon />} />
            </div>
            <Separator />
            <div className="ml-[9px] w-[120px] shrink-0">
              <RibbonButton label="Vincular" icon={<LinkIcon />} />
              <RibbonButton label="Desvincular" icon={<UnlinkIcon />} />
            </div>
            <Separator />
            <div className="ml-[8px] w-[132px] shrink-0">
              <RibbonButton label="Información" icon={<ToolsIcon />} />
              <RibbonButton label="Calendario" icon={<CalendarIcon />} />
              <RibbonButton label="Notas" icon={<NotesIcon />} />
            </div>
            <div className="w-[180px] shrink-0">
              <RibbonButton label="Asignar recursos" icon={<AssignIcon />} />
              <RibbonButton label="Guardar Linea de Base" />
              <RibbonButton label="Limpiar Linea de Base" />
            </div>
            <div>
              <RibbonButton label="Buscar" icon={<BinocularsIcon />} />
              <RibbonButton label="Moverse a la tarea" icon={<GoToTaskIcon />} />
              <RibbonButton label="Actualizar" />
            </div>
          </RibbonGroup>
        </div>
      </div>

      <main className="flex min-h-0 flex-1 overflow-hidden bg-white">
        <div className="w-[1018px] shrink-0 overflow-hidden">
          <TaskTable />
        </div>
        <div className="w-[8px] shrink-0 border-l-2 border-r-2 border-l-[#9aa0a4] border-r-[#75797c] bg-[#f2f2f2]">
          <svg width="5" height="30" viewBox="0 0 5 30" aria-hidden="true">
            <path d="M4.500 2V11L0 6.500ZM0 20V29L4.500 24.500Z" fill="#000" />
          </svg>
        </div>
        <div className="min-w-0 flex-1 overflow-hidden pl-px">
          <Timeline />
          <GanttChart />
        </div>
      </main>
    </div>
  );
}
